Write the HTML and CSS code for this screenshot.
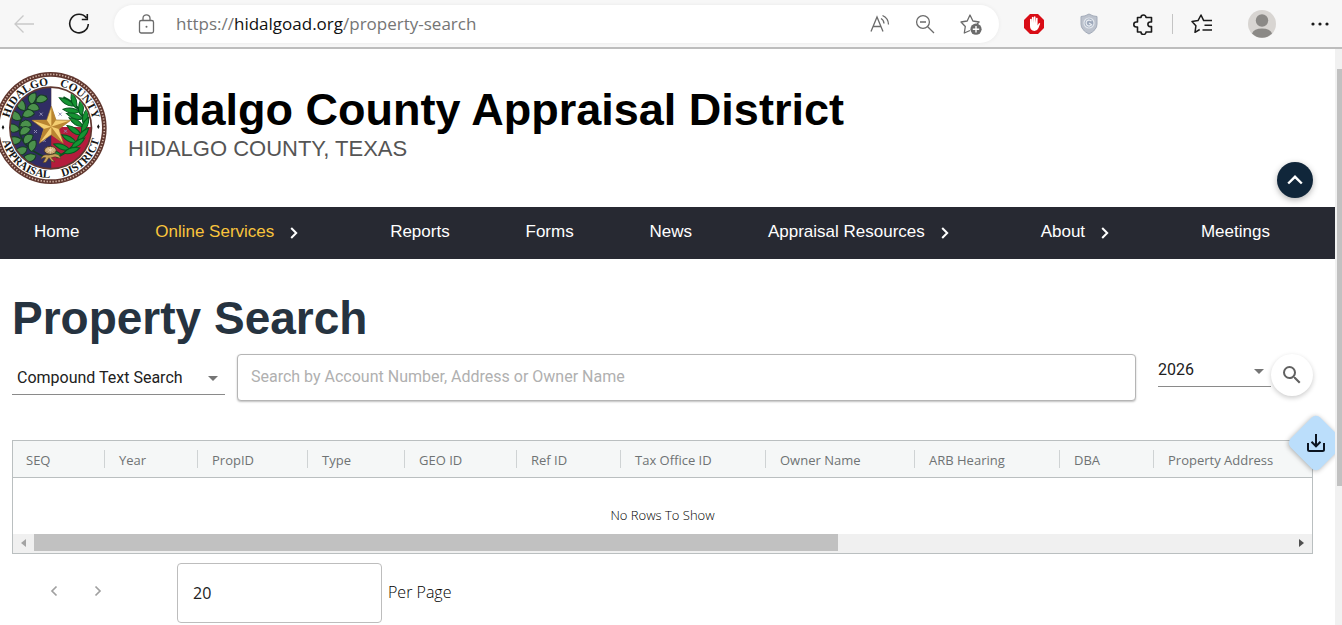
FILE: index.html
```html
<!DOCTYPE html>
<html lang="en">
<head>
  <meta charset="UTF-8" />
  <meta name="viewport" content="width=device-width, initial-scale=1.0"/>
  <title>Property Search</title>
  <link rel="stylesheet" href="styles.css">
</head>
<body>
  <div class="browser-bar">
    <button class="bar-btn back-btn" aria-label="Back">
      <svg width="22" height="20" viewBox="0 0 22 20" fill="none" stroke="#c9c9c9" stroke-width="1.3"><path d="M21 10H2M10.500 1.500 2 10l8.500 8.500"/></svg>
    </button>
    <button class="bar-btn reload-btn" aria-label="Refresh">
      <svg width="22" height="22" viewBox="0 0 22 22" fill="none" stroke="#1b1b1b" stroke-width="1.6"><path d="M18.500 5A9.300 9.300 0 1 0 20.300 11M19.300 1v5.500h-5.500"/></svg>
    </button>
    <div class="address">
      <svg width="17" height="20" viewBox="0 0 17 20" fill="none" stroke="#6b6b6b" stroke-width="1.3"><rect x="1.500" y="6.500" width="14" height="12.500" rx="1.800"/><path d="M5 6.500V4.300a3.500 3.500 0 0 1 7 0v2.200"/><circle cx="8.500" cy="12.700" r="1" fill="#6b6b6b" stroke="none"/></svg>
      <div class="url" role="textbox" aria-label="Address">https://<span>hidalgoad.org</span>/property-search</div>
      <button class="bar-btn" aria-label="Read aloud">
        <svg width="20" height="20" viewBox="0 0 20 20" fill="none" stroke="#6b6b6b" stroke-width="1.3"><path d="M1 17.500 7 3l6 14.500M3.200 12.500h7.700M11 4.500q2.800 1.500 3 5M12.500 1.500q5.800 2.500 6 9"/></svg>
      </button>
      <button class="bar-btn" aria-label="Zoom out">
        <svg width="20" height="20" viewBox="0 0 20 20" fill="none" stroke="#6b6b6b" stroke-width="1.3"><circle cx="8" cy="8" r="6.400"/><path d="M5 8h6M12.700 12.700 19 19"/></svg>
      </button>
      <button class="bar-btn" aria-label="Add to favorites">
        <svg width="22" height="22" viewBox="0 0 22 22"><path d="M10 17.500 4.300 20l1-6.500L1 9l6.200-1L10 2l2.900 6 6.200 1-2 2" fill="none" stroke="#6b6b6b" stroke-width="1.300" stroke-linejoin="round"/><circle cx="16" cy="16.200" r="5.600" fill="#6b6b6b"/><path d="M16 13v6.400M12.800 16.200h6.400" stroke="#fff" stroke-width="1.400"/></svg>
      </button>
    </div>
    <div class="extensions">
      <button class="bar-btn" aria-label="Ad blocker">
        <svg width="22" height="22" viewBox="0 0 22 22"><path d="M7 1h8l6 6v8l-6 6H7l-6-6V7z" fill="#d90d16"/><path d="M7 13V6.300q.8-1.100 1.600 0V10l.3-5.700q.8-1 1.600 0V10l.4-6.200q.8-.9 1.600 0l.1 6.200.5-4.900q.8-.9 1.500 0V12.500l1.100-2q.8-.8 1.500 0L15.500 15q-1.300 3-4 3-4.500-.3-4.500-5" fill="#fff"/></svg>
      </button>
      <button class="bar-btn" aria-label="Privacy shield">
        <svg width="18" height="22" viewBox="0 0 18 22"><path d="M9 1q4 2.500 8 2.500V11q0 6-8 10Q1 17 1 11V3.500Q5 3.500 9 1z" fill="#bcc2cd" stroke="#a3abb9"/><circle cx="9" cy="10" r="5" fill="#9da8bb" stroke="#e1e6ec" stroke-width="1.200"/><path d="M11.500 8.200a3 3 0 1 0 .1 3.500L9 10" fill="none" stroke="#e8ecf1" stroke-width="1.300"/></svg>
      </button>
      <button class="bar-btn" aria-label="Extensions">
        <svg width="21" height="22" viewBox="0 0 21 22" fill="none" stroke="#1b1b1b" stroke-width="1.600" stroke-linejoin="round"><path d="M4.500 4.500H8a2.500 2.500 0 1 1 5 0h5.500V9h-1.300a2.300 2.300 0 1 0 0 4.600h1.300v5.400H13a2.500 2.500 0 0 1-5 0H4.500v-5H3.300a2.500 2.500 0 0 1 0-5h1.200z"/></svg>
      </button>
      <span class="divider"></span>
      <button class="bar-btn" aria-label="Favorites">
        <svg width="22" height="22" viewBox="0 0 22 22" fill="none" stroke="#1b1b1b" stroke-width="1.500" stroke-linejoin="round"><path d="M8.700 16.500 4 19.300l.9-6.500L1 8.500l6-.9L10 2l2.700 5.600H21M13.500 12.300H21M11.500 17H21"/></svg>
      </button>
      <button class="bar-btn" aria-label="Profile">
        <svg width="28" height="28" viewBox="0 0 28 28"><circle cx="14" cy="14" r="14" fill="#d8d5d2"/><circle cx="14" cy="10.500" r="6.200" fill="#8b8986"/><path d="M4 23.500q2-5 10-5t10 5a14 14 0 0 1-20 0" fill="#8b8986"/></svg>
      </button>
      <button class="bar-btn" aria-label="Settings and more">
        <svg width="18" height="4" viewBox="0 0 18 4" fill="#1b1b1b"><circle cx="2" cy="2" r="1.600"/><circle cx="9" cy="2" r="1.600"/><circle cx="16" cy="2" r="1.600"/></svg>
      </button>
    </div>
  </div>

  <div class="viewport">
    <div class="page">
      <header class="site-header">
        <svg class="seal" viewBox="-4 36 324 336" role="img" aria-label="County seal">
          <defs>
            <path id="topArc" d="M20 204a128 128 0 0 1 256 0"/>
            <path id="bottomArc" d="M-2 204a150 150 0 0 0 300 0"/>
            <path id="leaf" d="M0 0Q3-14 18-17 33-15 36 0 18 13 0 0"/>
            <path id="blade" d="M0 0Q17-18 50-6 26 11 0 0"/>
            <clipPath id="inner"><circle cx="148" cy="204" r="120"/></clipPath>
          </defs>
          <circle cx="148" cy="204" r="168" fill="#60372f"/>
          <circle cx="148" cy="204" r="161" fill="none" stroke="#d5b8aa" stroke-width="5" stroke-dasharray="4 5"/>
          <circle cx="148" cy="204" r="154" fill="#fff"/>
          <circle cx="148" cy="204" r="125" fill="#60372f"/>
          <g clip-path="url(#inner)">
            <path d="M20 80h130v250H20z" fill="#302d64"/>
            <path d="M150 80h130v121H150z" fill="#fff"/>
            <path d="M150 201h130v130H150z" fill="#b51c3c"/>
            <path d="M136 108Q60 145 54 200 52 260 134 292" fill="none" stroke="#163d24" stroke-width="5"/>
            <g fill="#4b914c" stroke="#173c25" stroke-width="3">
              <use href="#leaf" transform="translate(104 126) rotate(-15)"/>
              <use href="#leaf" transform="translate(91 133) rotate(-70)"/>
              <use href="#leaf" transform="translate(78 145) rotate(5)"/>
              <use href="#leaf" transform="translate(71 151) rotate(-110)"/>
              <use href="#leaf" transform="translate(64 169) rotate(-12)"/>
              <use href="#leaf" transform="translate(60 178) rotate(-135)"/>
              <use href="#leaf" transform="translate(55 197) rotate(0)"/>
              <use href="#leaf" transform="translate(55 208) rotate(-155)"/>
              <use href="#leaf" transform="translate(57 225) rotate(-30)"/>
              <use href="#leaf" transform="translate(60 238) rotate(-175)"/>
              <use href="#leaf" transform="translate(70 252) rotate(-45)"/>
              <use href="#leaf" transform="translate(77 263) rotate(165)"/>
              <use href="#leaf" transform="translate(91 275) rotate(-70)"/>
              <use href="#leaf" transform="translate(104 286) rotate(175)"/>
            </g>
            <path d="M186 112Q244 140 248 190 240 258 165 292" fill="none" stroke="#07571f" stroke-width="7"/>
            <g fill="#159332" stroke="#07571f" stroke-width="3">
              <use href="#blade" transform="translate(218 137) rotate(-145)"/>
              <use href="#blade" transform="translate(225 145) rotate(-100)"/>
              <use href="#blade" transform="translate(235 155) rotate(-165)"/>
              <use href="#blade" transform="translate(240 168) rotate(-85)"/>
              <use href="#blade" transform="translate(243 176) rotate(-155)"/>
              <use href="#blade" transform="translate(247 193) rotate(-70)"/>
              <use href="#blade" transform="translate(246 199) rotate(-142)"/>
              <use href="#blade" transform="translate(242 218) rotate(-60)"/>
              <use href="#blade" transform="translate(239 224) rotate(-140)"/>
              <use href="#blade" transform="translate(229 242) rotate(-42)"/>
              <use href="#blade" transform="translate(225 248) rotate(-145)"/>
              <use href="#blade" transform="translate(210 264) rotate(-30)"/>
              <use href="#blade" transform="translate(205 268) rotate(-155)"/>
              <use href="#blade" transform="translate(188 280) rotate(-12)"/>
              <use href="#blade" transform="translate(180 284) rotate(-160)"/>
            </g>
            <g fill="none" stroke="#8e8bb3" stroke-width="3">
              <path d="m115 158 9 9m0-9-9 9M98 210l9 9m0-9-9 9M188 209l9 9m0-9-9 9M124 237l9 9m0-9-9 9M172 158l9 9m0-9-9 9"/>
            </g>
            <path d="M119 298q3-17 24-13l8-3q24-4 27 14-16-9-28-3l11 13-10-2-8-11-9 14-9 1 8-15q-7-3-14 5" fill="#c6a35c" stroke="#594122" stroke-width="2"/>
            <ellipse cx="147" cy="271" rx="18" ry="12" fill="#c7a46d" stroke="#493926" stroke-width="3"/>
            <path d="M134 270h26M147 261v20M138 264l18 13M156 264l-18 13" stroke="#f5e0b8" stroke-width="2"/>
          </g>
          <path d="m150 139 14 41 44 1-35 26 13 43-36-26-36 26 13-43-35-26 44-1z" fill="#f4cf71" stroke="#9a702c" stroke-width="2"/>
          <path d="m150 139v61l14-20zM208 181l-58 19 23 7zM186 250l-36-50v24zM114 250l36-50-23 7zM92 181l58 19-14-20z" fill="#b98531"/>
          <g class="seal-text" text-anchor="middle">
            <text><textPath href="#topArc" startOffset="28%">HIDALGO</textPath></text>
            <text><textPath href="#topArc" startOffset="75%">COUNTY</textPath></text>
            <text><textPath href="#bottomArc" startOffset="29%">APPRAISAL</textPath></text>
            <text><textPath href="#bottomArc" startOffset="75%">DISTRICT</textPath></text>
          </g>
          <path d="m5 195 4 7-4 7-4-7zM291 193l4 7-4 7-4-7z" fill="#171717"/>
        </svg>
        <div class="site-name">
          <h1>Hidalgo County Appraisal District</h1>
          <p>HIDALGO COUNTY, TEXAS</p>
        </div>
      </header>

      <nav class="main-nav">
        <a href="#">Home</a>
        <a href="#" class="active has-menu">Online Services <svg width="8" height="12" viewBox="0 0 8 12"><path d="m1.200 1 5 5-5 5"/></svg></a>
        <a href="#">Reports</a>
        <a href="#">Forms</a>
        <a href="#">News</a>
        <a href="#" class="has-menu">Appraisal Resources <svg width="8" height="12" viewBox="0 0 8 12"><path d="m1.200 1 5 5-5 5"/></svg></a>
        <a href="#" class="has-menu">About <svg width="8" height="12" viewBox="0 0 8 12"><path d="m1.200 1 5 5-5 5"/></svg></a>
        <a href="#">Meetings</a>
      </nav>

      <main>
        <h2>Property Search</h2>
        <form class="search-row">
          <div class="select-box type-select">
            <select aria-label="Search type"><option>Compound Text Search</option></select>
          </div>
          <input type="text" class="search-input" aria-label="Search" placeholder="Search by Account Number, Address or Owner Name">
          <div class="select-box year-select">
            <select aria-label="Year"><option>2026</option></select>
          </div>
          <button type="button" class="search-btn" aria-label="Search">
            <svg width="24" height="24" viewBox="0 0 24 24" fill="#616161"><path d="M15.500 14h-.79l-.28-.27A6.470 6.470 0 0 0 16 9.500 6.500 6.500 0 1 0 9.500 16c1.610 0 3.090-.59 4.230-1.570l.27.28v.79l5 4.990L20.490 19l-4.990-5zm-6 0C7.010 14 5 11.990 5 9.500S7.010 5 9.500 5 14 7.010 14 9.500 11.990 14 9.500 14z"/></svg>
          </button>
        </form>

        <div class="grid">
          <table>
            <thead>
              <tr>
                <th class="col-seq">SEQ</th>
                <th class="col-year">Year</th>
                <th class="col-prop">PropID</th>
                <th class="col-type">Type</th>
                <th class="col-geo">GEO ID</th>
                <th class="col-ref">Ref ID</th>
                <th class="col-tax">Tax Office ID</th>
                <th class="col-owner">Owner Name</th>
                <th class="col-arb">ARB Hearing</th>
                <th class="col-dba">DBA</th>
                <th>Property Address</th>
              </tr>
            </thead>
            <tbody>
              <tr><td colspan="11">No Rows To Show</td></tr>
            </tbody>
          </table>
          <div class="h-scroll">
            <button class="scroll-left" aria-label="Scroll left"></button>
            <div class="h-track"><div class="h-thumb"></div></div>
            <button class="scroll-right" aria-label="Scroll right"></button>
          </div>
        </div>

        <div class="pager">
          <button aria-label="Previous page"><svg width="8" height="12" viewBox="0 0 8 12"><path d="M6.500 1.500 2 6l4.500 4.500"/></svg></button>
          <button aria-label="Next page"><svg width="8" height="12" viewBox="0 0 8 12"><path d="M1.500 1.500 6 6l-4.500 4.500"/></svg></button>
          <input type="text" id="perPage" value="20">
          <label for="perPage">Per Page</label>
        </div>
      </main>

      <button class="top-btn" aria-label="Back to top">
        <svg width="16" height="10" viewBox="0 0 16 10" fill="none" stroke="#fff" stroke-width="2.400"><path d="m1.200 8.500 6.800-6.700 6.800 6.700"/></svg>
      </button>
      <button class="download-btn" aria-label="Download">
        <svg width="20" height="20" viewBox="0 0 20 20" fill="none" stroke="#0b1420" stroke-width="2"><path d="M10 1v12M5.500 8.800 10 13.300l4.500-4.500M2 10v6.500q0 1.500 1.500 1.500h13q1.500 0 1.500-1.500V10"/></svg>
      </button>
    </div>
    <div class="v-scroll"><div class="v-thumb"></div></div>
  </div>
</body>
</html>
```
FILE: styles.css
```css
* {
  box-sizing: border-box;
}

body {
  margin: 0;
  height: 100vh;
  display: flex;
  flex-direction: column;
  overflow: hidden;
  background: #fff;
  font-family: Roboto, Arial, sans-serif;
}

button {
  padding: 0;
  border: none;
  background: none;
  cursor: pointer;
}

svg {
  display: block;
}

/* browser bar */
.browser-bar {
  display: flex;
  align-items: center;
  height: 49px;
  flex-shrink: 0;
  padding: 0 13px;
  background: #f7f7f7;
  border-bottom: 2px solid #bdbdbd;
}

.bar-btn {
  display: flex;
  align-items: center;
  justify-content: center;
}

.reload-btn {
  margin-left: 33px;
}

.address {
  display: flex;
  align-items: center;
  flex: 1;
  gap: 25px;
  height: 38px;
  margin-left: 24px;
  padding: 0 17px 0 24px;
  background: #fff;
  border-radius: 19px;
  box-shadow: 0 0 4px rgba(0, 0, 0, 0.06);
}

.url {
  flex: 1;
  margin-left: -4px;
  font-family: "Open Sans", "Noto Sans", sans-serif;
  font-size: 17px;
  color: #757575;
  white-space: nowrap;
}

.url span {
  color: #111;
}

.extensions {
  display: flex;
  align-items: center;
  gap: 35px;
  margin-left: 24px;
}

.divider {
  width: 1px;
  height: 20px;
  margin: 0 -17px;
  background: #c4c4c4;
}

/* page */
.viewport {
  display: flex;
  flex: 1;
  min-height: 0;
}

.page {
  position: relative;
  flex: 1;
  min-width: 0;
  overflow: hidden;
}

.v-scroll {
  width: 7px;
  padding: 20px 0 0 2px;
  background: #f1f1f1;
}

.v-thumb {
  height: 75%;
  background: #c1c1c1;
}

.site-header {
  display: flex;
  align-items: flex-start;
  gap: 20px;
  height: 158px;
  padding-top: 23px;
  font-family: "Liberation Sans", Arial, sans-serif;
}

.seal {
  width: 108px;
  height: 112px;
}

.seal-text {
  font-family: "Liberation Serif", "Times New Roman", serif;
  font-size: 34px;
  font-weight: bold;
  fill: #171717;
}

.site-name {
  padding-top: 12px;
}

.site-name h1 {
  margin: 0;
  font-size: 45px;
  line-height: 52px;
  color: #000;
}

.site-name p {
  margin: 0;
  font-size: 22px;
  line-height: 26px;
  color: #555;
}

.main-nav {
  display: flex;
  align-items: center;
  justify-content: space-between;
  height: 52px;
  padding: 0 65px 2px 34px;
  background: #272932;
  font-family: "Liberation Sans", Arial, sans-serif;
  font-size: 17px;
}

.main-nav a {
  display: flex;
  align-items: center;
  color: #fff;
  text-decoration: none;
  white-space: nowrap;
}

.main-nav a.active {
  color: #f9c43c;
}

.has-menu svg {
  margin: 2px 16px 0;
  fill: none;
  stroke: #fff;
  stroke-width: 2;
}

main {
  padding: 32px 22px 0 12px;
}

h2 {
  margin: 0 0 9px;
  font-family: "Liberation Sans", Arial, sans-serif;
  font-size: 46px;
  line-height: 54px;
  color: #263340;
}

.search-row {
  display: flex;
  align-items: flex-start;
}

.select-box {
  position: relative;
  border-bottom: 1px solid #8a8a8a;
}

/* caret */
.select-box::after {
  content: "";
  position: absolute;
  right: 7px;
  top: 15px;
  border: 5px solid transparent;
  border-top-color: #757575;
  border-bottom: none;
  pointer-events: none;
}

.select-box select {
  display: block;
  appearance: none;
  width: 100%;
  height: 33px;
  padding: 0 20px 0 5px;
  border: none;
  background: none;
  font-family: Roboto, sans-serif;
  font-size: 16px;
  color: #212121;
}

.type-select {
  width: 213px;
  margin-top: 7px;
}

.year-select {
  width: 113px;
  margin-left: 22px;
}

.year-select select {
  height: 32px;
  padding: 0 20px 2px 0;
}

.search-input {
  flex: 1;
  min-width: 0;
  height: 47px;
  margin-left: 12px;
  padding: 0 13px 2px;
  border: 1px solid #b5b5b5;
  border-radius: 4px;
  box-shadow: 0 1px 2px rgba(0, 0, 0, 0.25);
  font-family: Roboto, sans-serif;
  font-size: 16px;
}

.search-input::placeholder {
  color: #b0b0b0;
}

.search-btn {
  display: flex;
  align-items: center;
  justify-content: center;
  width: 42px;
  height: 42px;
  border-radius: 50%;
  background: #fff;
  box-shadow: 0 2px 5px rgba(0, 0, 0, 0.2);
}

/* results grid */
.grid {
  margin-top: 39px;
  border: 1px solid #babfc0;
  font-family: "Open Sans", "Noto Sans", sans-serif;
}

table {
  width: 100%;
  table-layout: fixed;
  border-collapse: separate;
  border-spacing: 0;
}

th {
  height: 37px;
  padding: 2px 0 0 14px;
  background: linear-gradient(#cfd3d4, #cfd3d4) right center / 1px 18px no-repeat #f5f7f7;
  border-bottom: 1px solid #babfc0;
  font-size: 13px;
  font-weight: 500;
  color: #6f7374;
  text-align: left;
  white-space: nowrap;
}

th:first-child {
  padding-left: 13px;
}

th:last-child {
  background: #f5f7f7;
}

td {
  height: 56px;
  padding: 18px 0 0;
  font-family: "Open Sans", "Noto Sans", sans-serif;
  font-size: 13px;
  font-weight: 300;
  color: #000;
  text-align: center;
}

.col-seq { width: 92px; }
.col-year { width: 93px; }
.col-prop { width: 110px; }
.col-type { width: 97px; }
.col-geo { width: 112px; }
.col-ref { width: 104px; }
.col-tax { width: 145px; }
.col-owner { width: 149px; }
.col-arb { width: 145px; }
.col-dba { width: 94px; }

.h-scroll {
  display: flex;
  align-items: center;
  height: 19px;
  padding-bottom: 2px;
  background: #f0f0f0;
}

.h-scroll button {
  display: flex;
  align-items: center;
  justify-content: center;
  width: 21px;
  height: 17px;
}

.h-scroll button::before {
  content: "";
  border: 4px solid transparent;
}

.h-scroll .scroll-left::before {
  border-left: none;
  border-right: 5px solid #a3a3a3;
}

.h-scroll .scroll-right::before {
  border-right: none;
  border-left: 5px solid #505050;
}

.h-track {
  flex: 1;
}

.h-thumb {
  width: 64%;
  height: 17px;
  background: #c1c1c1;
}

.pager {
  display: flex;
  align-items: center;
  margin-top: 9px;
  padding-left: 30px;
  font-family: "Open Sans", "Noto Sans", sans-serif;
}

.pager button {
  display: flex;
  align-items: center;
  justify-content: center;
  width: 24px;
  height: 24px;
  margin: 0 20px 4px 0;
}

.pager button svg {
  fill: none;
  stroke: #a0a0a0;
  stroke-width: 1.7;
}

.pager input {
  width: 205px;
  height: 60px;
  margin: 0 6px 0 47px;
  padding: 0 15px;
  border: 1px solid #bdbdbd;
  border-radius: 4px;
  font-family: "Open Sans", "Noto Sans", sans-serif;
  font-size: 16px;
  color: #212121;
}

.pager label {
  padding-bottom: 2px;
  font-size: 16px;
  font-weight: 300;
  color: #000;
}

/* floating buttons */
.top-btn {
  position: absolute;
  top: 113px;
  right: 22px;
  display: flex;
  align-items: center;
  justify-content: center;
  width: 36px;
  height: 36px;
  border-radius: 50%;
  background: #10263a;
  box-shadow: 0 2px 6px rgba(0, 0, 0, 0.3);
}

.download-btn {
  position: absolute;
  top: 373px;
  right: -2px;
  display: flex;
  align-items: center;
  justify-content: center;
  width: 42px;
  height: 42px;
  border-radius: 6px;
  background: #bbdefb;
  box-shadow: 0 1px 5px rgba(0, 0, 0, 0.3);
  transform: rotate(45deg);
}

.download-btn svg {
  transform: rotate(-45deg);
}
```
